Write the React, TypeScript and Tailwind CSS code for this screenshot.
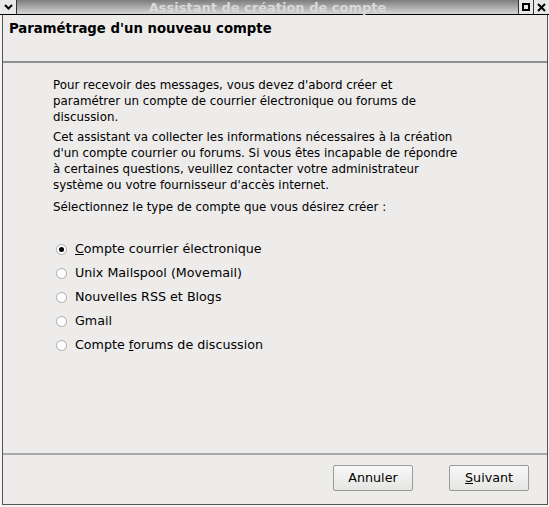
import React from "react";

function Radio({ checked }: { checked?: boolean }) {
  return (
    <span className="w-[11px] h-[11px] rounded-full border border-[#a9a9a9] bg-white flex items-center justify-center shrink-0">
      {checked && <span className="w-[5px] h-[5px] rounded-full bg-black" />}
    </span>
  );
}

export default function App() {
  const font = { fontFamily: '"DejaVu Sans", sans-serif' };
  const options: { label: React.ReactNode; checked?: boolean }[] = [
    { label: <><u>C</u>ompte courrier électronique</>, checked: true },
    { label: "Unix Mailspool (Movemail)" },
    { label: "Nouvelles RSS et Blogs" },
    { label: "Gmail" },
    { label: <>Compte <u>f</u>orums de discussion</> },
  ];
  return (
    <div className="w-[549px] h-[507px] bg-[#f4f4f4] flex flex-col text-black" style={font}>
      {/* title bar */}
      <div className="h-[15px] flex border-b border-black shrink-0">
        <div className="w-[17px] bg-[#e8e8e8] border-r border-[#333] flex items-center justify-center">
          <svg width="9" height="6" viewBox="0 0 9 6"><path d="M1 1 L4.5 4.5 L8 1" stroke="#000" strokeWidth="2" fill="none" /></svg>
        </div>
        <div className="flex-1 bg-gradient-to-b from-[#7d7d7d] via-[#a9a9a9] to-[#d6d6d6] flex items-center justify-center text-[13px] font-bold text-[#d9d9d9] leading-none">
          Assistant de création de compte
        </div>
        <div className="w-[15px] bg-[#e8e8e8] border-l border-[#333] flex items-center justify-center">
          <span className="w-[8px] h-[8px] border-2 border-black" />
        </div>
        <div className="w-[16px] bg-[#e8e8e8] border-l border-[#333] flex items-center justify-center">
          <svg width="9" height="9" viewBox="0 0 9 9"><path d="M1 1 L8 8 M8 1 L1 8" stroke="#000" strokeWidth="2" /></svg>
        </div>
      </div>
      <div className="flex-1 flex ml-[2px] mr-[1px] mb-[2px] border-l border-r border-b border-[#555] bg-[#edeceb] flex-col">
        {/* header */}
        <div className="h-[48px] border-b-2 border-[#8f8f8f] px-[6px] pt-[6px] shrink-0">
          <div className="text-[13.25px] font-bold leading-[16px]">Paramétrage d'un nouveau compte</div>
        </div>
        {/* body */}
        <div className="flex-1 pl-[50px] pr-[20px] pt-[14px] text-[11.85px] leading-[16px]">
          <p>
            Pour recevoir des messages, vous devez d'abord créer et<br />
            paramétrer un compte de courrier électronique ou forums de<br />
            discussion.
          </p>
          <p className="mt-[4px]">
            Cet assistant va collecter les informations nécessaires à la création<br />
            d'un compte courrier ou forums. Si vous êtes incapable de répondre<br />
            à certaines questions, veuillez contacter votre administrateur<br />
            système ou votre fournisseur d'accès internet.
          </p>
          <p className="mt-[6px]">Sélectionnez le type de compte que vous désirez créer :</p>
          <div className="mt-[26px] flex flex-col gap-[8px] pl-[3px] text-[12.7px]">
            {options.map((o, i) => (
              <div key={i} className="flex items-center gap-[8px] h-[16px]">
                <Radio checked={o.checked} />
                <span>{o.label}</span>
              </div>
            ))}
          </div>
        </div>
        {/* footer */}
        <div className="h-[51px] border-t-2 border-[#a8a8a8] flex justify-end items-start pt-[10px] pr-[18px] gap-[36px] shrink-0">
          <button className="w-[80px] h-[26px] border border-[#9a9a9a] rounded-[2px] bg-gradient-to-b from-[#f8f8f8] to-[#e6e5e3] text-[12.7px]">Annuler</button>
          <button className="w-[80px] h-[26px] border border-[#9a9a9a] rounded-[2px] bg-gradient-to-b from-[#f8f8f8] to-[#e6e5e3] text-[12.7px]"><u>S</u>uivant</button>
        </div>
      </div>
    </div>
  );
}
